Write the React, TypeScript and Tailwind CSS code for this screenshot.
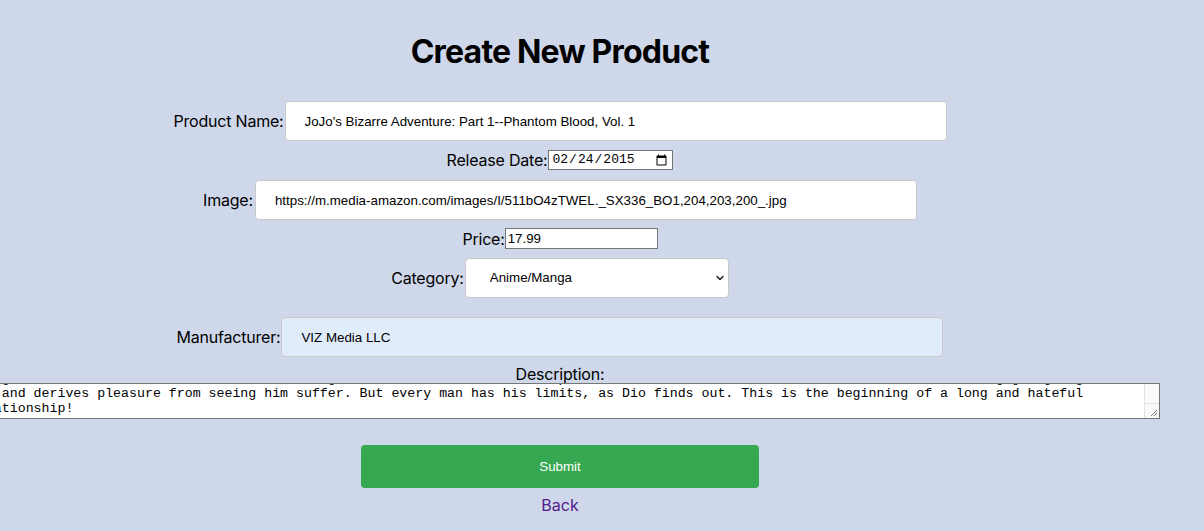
import React, { useEffect, useRef } from 'react';
import { ChevronDown } from 'lucide-react';

const description =
  "Young Jonathan Joestar's life is forever changed when he meets his new adopted brother, Dio. For some reason, Dio has a smoldering grudge against him and derives pleasure from seeing him suffer. But every man has his limits, as Dio finds out. This is the beginning of a long and hateful relationship!";

const labelCls = "text-[16px] tracking-[-0.2px] text-black font-['Inter',sans-serif] whitespace-nowrap";
const bigInput =
  "h-full w-[662px] rounded-[4px] border border-[#c9c9c9] bg-white pl-[19px] text-[13.33px] text-black font-['Liberation_Sans',Arial,sans-serif] outline-none";

const App: React.FC = () => {
  const areaRef = useRef<HTMLTextAreaElement>(null);

  useEffect(() => {
    if (areaRef.current) areaRef.current.scrollTop = areaRef.current.scrollHeight;
  }, []);

  return (
    <div className="min-h-screen w-full bg-[#cfd8ea]">
      <div className="w-[1120px] flex flex-col items-center">
        <h1 className="mt-[33px] h-[38px] leading-[38px] text-[32px] tracking-[-0.8px] font-bold text-black font-['Inter',sans-serif]">
          Create New Product
        </h1>

        <div className="mt-[30px] h-[40px] flex items-center gap-px">
          <label className={labelCls}>Product Name:</label>
          <input className={bigInput} defaultValue="JoJo's Bizarre Adventure: Part 1--Phantom Blood, Vol. 1" />
        </div>

        <div className="mt-[9px] h-[20px] flex items-center gap-px">
          <label className={labelCls}>Release Date:</label>
          <input
            type="date"
            defaultValue="2015-02-24"
            className="w-[125px] h-[20px] border border-[#767676] bg-white px-[2px] text-[13px] text-black font-['Liberation_Mono',monospace]"
          />
        </div>

        <div className="mt-[10px] h-[40px] flex items-center gap-[2px]">
          <label className={labelCls}>Image:</label>
          <input className={bigInput} defaultValue="https://m.media-amazon.com/images/I/511bO4zTWEL._SX336_BO1,204,203,200_.jpg" />
        </div>

        <div className="mt-[8px] h-[21px] flex items-center">
          <label className={labelCls}>Price:</label>
          <input
            defaultValue="17.99"
            className="w-[153px] h-[21px] border border-[#767676] bg-white px-[2px] text-[13.33px] text-black font-['Liberation_Sans',Arial,sans-serif] outline-none"
          />
        </div>

        <div className="mt-[9px] h-[40px] flex items-center gap-px">
          <label className={labelCls}>Category:</label>
          <div className="relative h-[40px] w-[264px]">
            <select
              defaultValue="Anime/Manga"
              className="appearance-none h-full w-full rounded-[4px] border border-[#c9c9c9] bg-white pl-[24px] text-[13.33px] text-black font-['Liberation_Sans',Arial,sans-serif] outline-none"
            >
              <option>Anime/Manga</option>
              <option>Books</option>
              <option>Games</option>
            </select>
            <ChevronDown
              size={12}
              strokeWidth={3}
              className="absolute right-[3px] top-[14px] text-[#222] pointer-events-none"
            />
          </div>
        </div>

        <div className="mt-[19px] h-[40px] flex items-center gap-px">
          <label className={labelCls}>Manufacturer:</label>
          <input className={bigInput + " !bg-[#e1ecfa]"} defaultValue="VIZ Media LLC" />
        </div>

        <label className={labelCls + " mt-[8px] leading-[18px]"}>Description:</label>
        <div className="ml-[7px] w-[1193px] h-[36px] flex border border-[#767676] bg-white shrink-0">
          <textarea
            ref={areaRef}
            defaultValue={description}
            spellCheck={false}
            className="flex-1 h-full resize-none overflow-hidden pl-[2px] pr-[20px] py-[2px] text-[13.25px] leading-[15px] text-black font-['Liberation_Mono',monospace] outline-none"
          />
          <div className="w-[15px] h-full bg-[#fafafa] border-l border-[#e2e2e2] flex flex-col justify-end">
            <div className="h-[15px] border-t border-[#e2e2e2] flex items-end justify-end">
              <svg width="9" height="9" viewBox="0 0 9 9" className="mb-[1px] mr-[1px]">
                <path d="M8 2 L2 8 M8 5 L5 8" stroke="#777" strokeWidth="1" />
              </svg>
            </div>
          </div>
        </div>

        <button className="mt-[26px] h-[43px] w-[398px] rounded-[4px] bg-[#36a852] text-white text-[13.33px] font-['Liberation_Sans',Arial,sans-serif]">
          Submit
        </button>

        <a href="#" className="mt-[8px] leading-[18px] text-[16px] text-[#551a8b] font-['Inter',sans-serif]">
          Back
        </a>
      </div>
    </div>
  );
};

export default App;
